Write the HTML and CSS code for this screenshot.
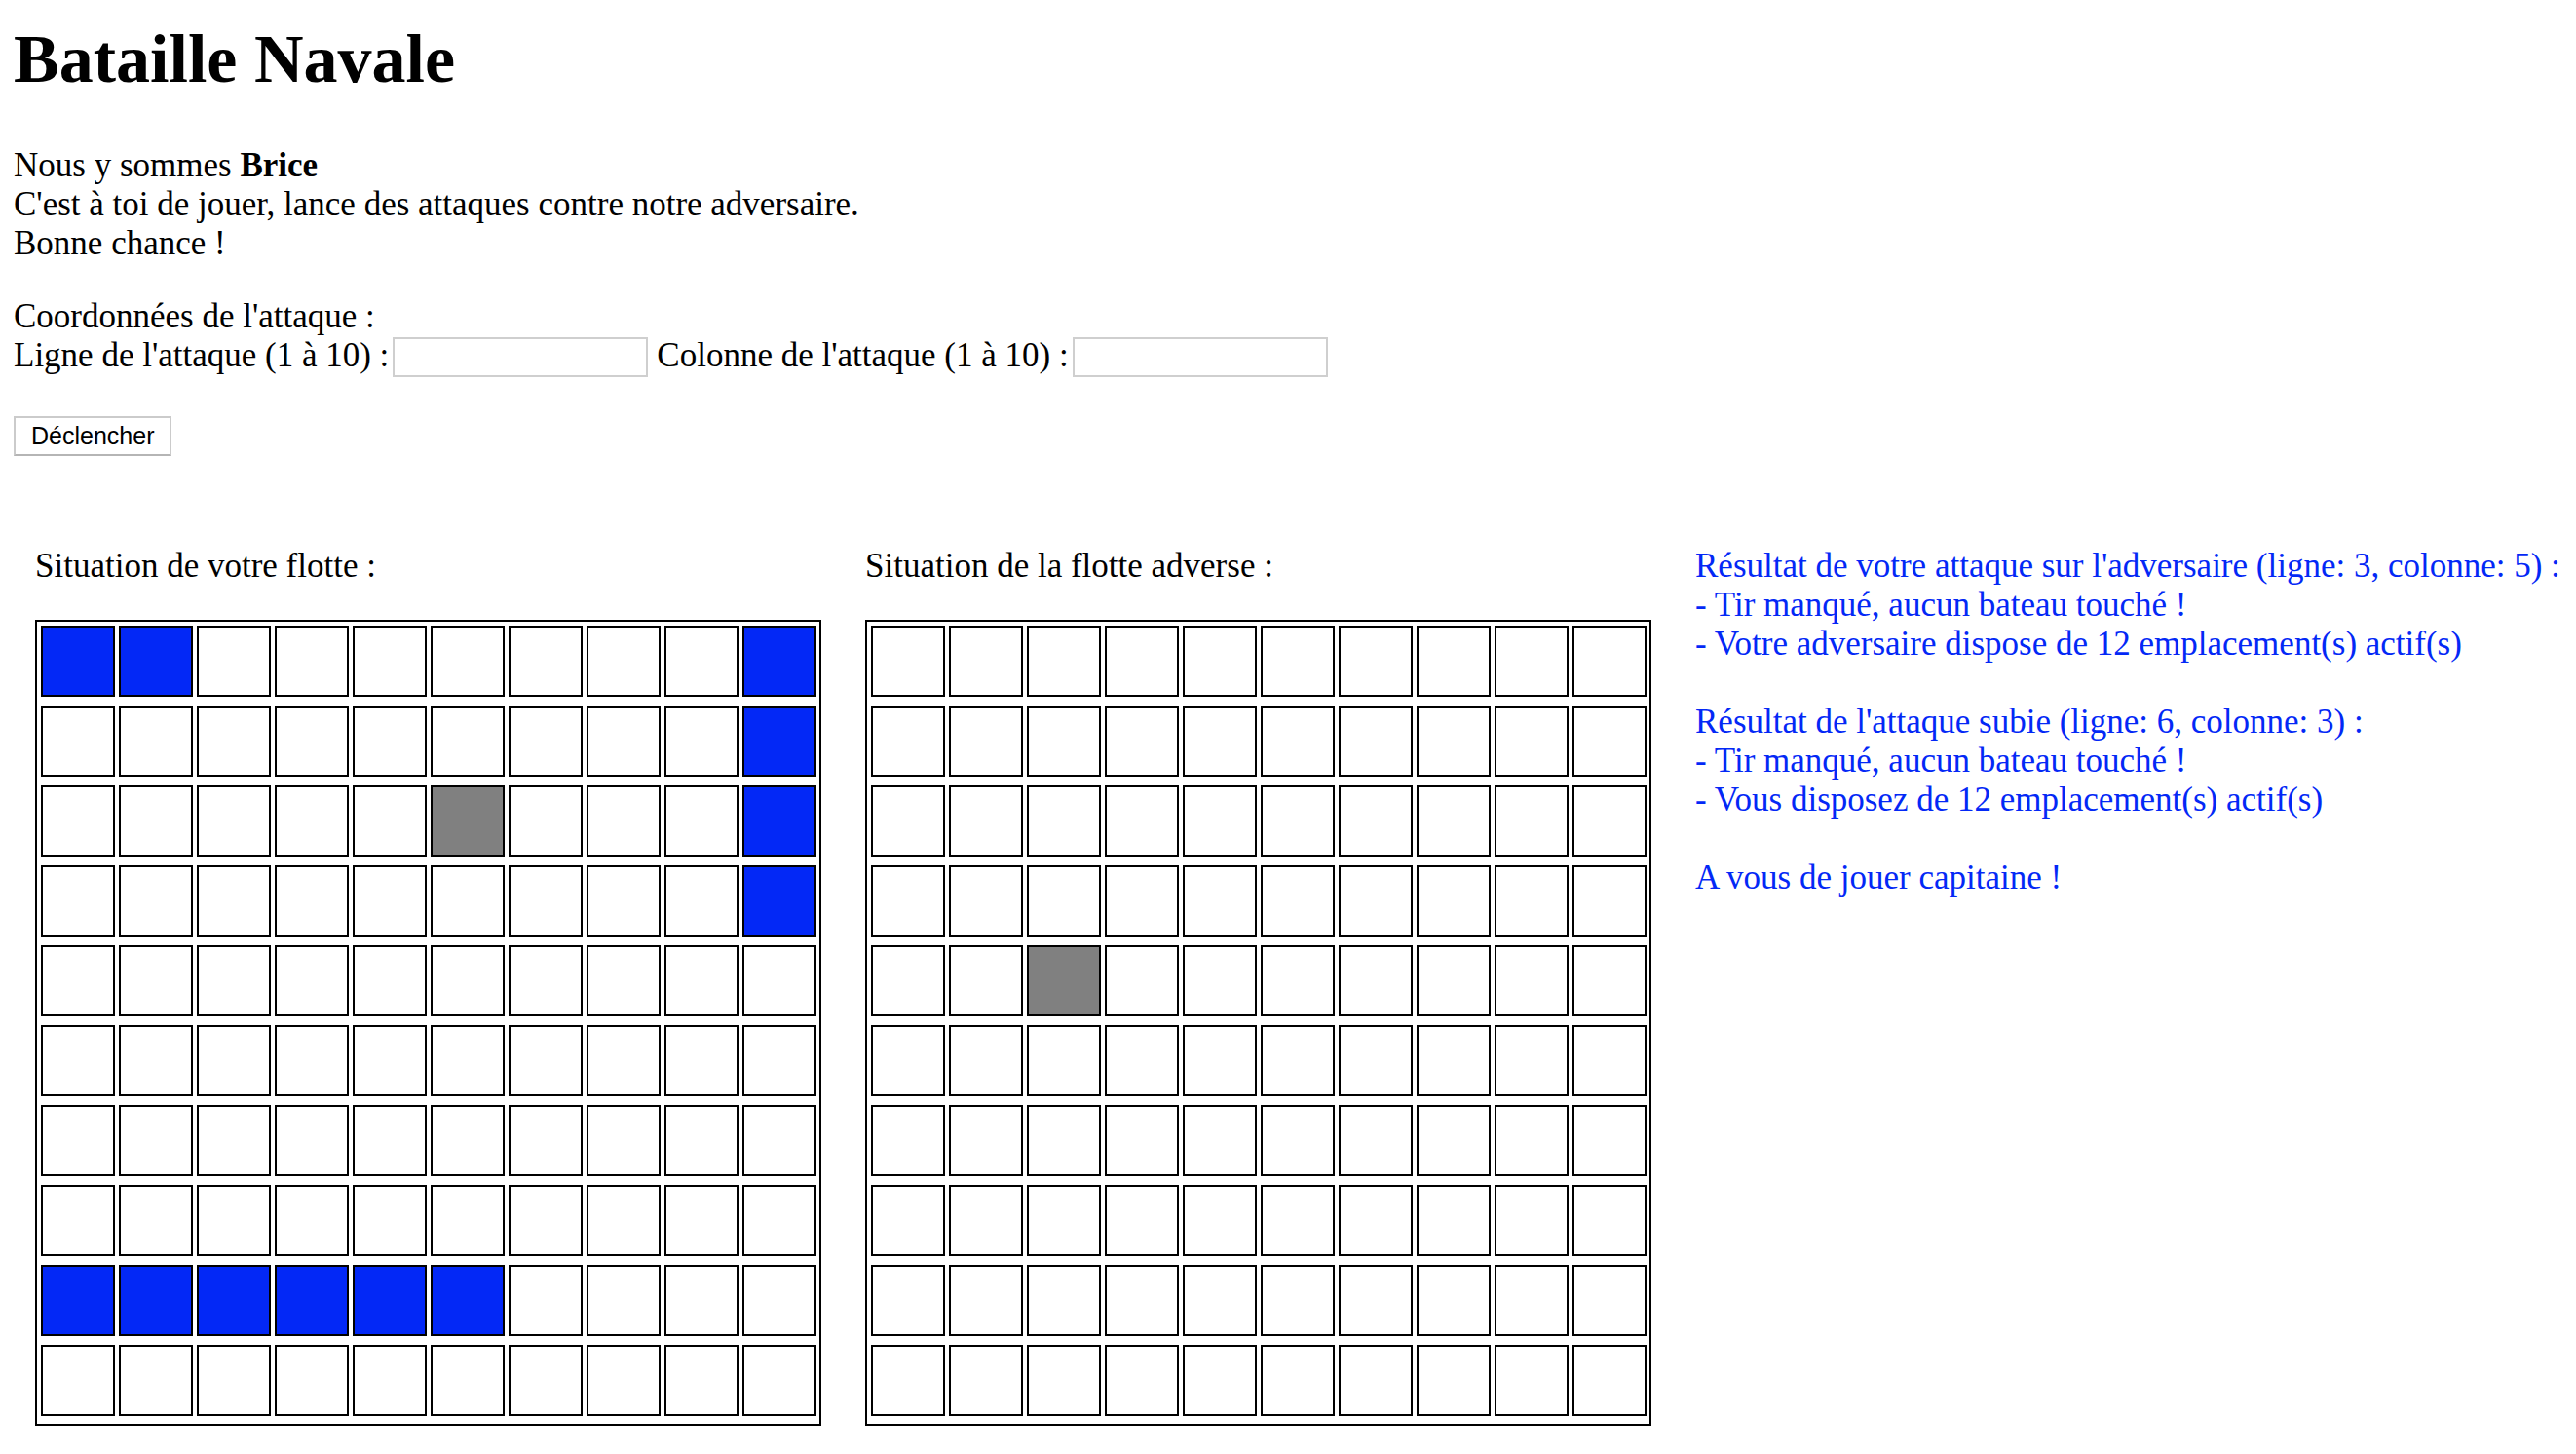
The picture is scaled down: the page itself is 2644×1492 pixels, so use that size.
FILE: index.html
```html
<!DOCTYPE html>
<html lang="fr">
<head>
<meta charset="utf-8">
<title>Bataille Navale</title>
<link rel="stylesheet" href="styles.css">
</head>
<body>
<h1 class="title">Bataille Navale</h1>
<p class="intro">Nous y sommes <b>Brice</b><br>C'est à toi de jouer, lance des attaques contre notre adversaire.<br>Bonne chance !</p>
<form class="attack">
  <div class="coord-title">Coordonnées de l'attaque :</div>
  <div class="coord-row"><label>Ligne de l'attaque (1 à 10) :</label><input class="field" type="text"><label class="label-col">Colonne de l'attaque (1 à 10) :</label><input class="field" type="text"></div>
  <button class="fire" type="button">Déclencher</button>
</form>
<div class="boards">
  <section class="board">
    <p class="board-title">Situation de votre flotte :</p>
    <div class="grid">
      <div class="c ship"></div><div class="c ship"></div><div class="c"></div><div class="c"></div><div class="c"></div><div class="c"></div><div class="c"></div><div class="c"></div><div class="c"></div><div class="c ship"></div>
      <div class="c"></div><div class="c"></div><div class="c"></div><div class="c"></div><div class="c"></div><div class="c"></div><div class="c"></div><div class="c"></div><div class="c"></div><div class="c ship"></div>
      <div class="c"></div><div class="c"></div><div class="c"></div><div class="c"></div><div class="c"></div><div class="c miss"></div><div class="c"></div><div class="c"></div><div class="c"></div><div class="c ship"></div>
      <div class="c"></div><div class="c"></div><div class="c"></div><div class="c"></div><div class="c"></div><div class="c"></div><div class="c"></div><div class="c"></div><div class="c"></div><div class="c ship"></div>
      <div class="c"></div><div class="c"></div><div class="c"></div><div class="c"></div><div class="c"></div><div class="c"></div><div class="c"></div><div class="c"></div><div class="c"></div><div class="c"></div>
      <div class="c"></div><div class="c"></div><div class="c"></div><div class="c"></div><div class="c"></div><div class="c"></div><div class="c"></div><div class="c"></div><div class="c"></div><div class="c"></div>
      <div class="c"></div><div class="c"></div><div class="c"></div><div class="c"></div><div class="c"></div><div class="c"></div><div class="c"></div><div class="c"></div><div class="c"></div><div class="c"></div>
      <div class="c"></div><div class="c"></div><div class="c"></div><div class="c"></div><div class="c"></div><div class="c"></div><div class="c"></div><div class="c"></div><div class="c"></div><div class="c"></div>
      <div class="c ship"></div><div class="c ship"></div><div class="c ship"></div><div class="c ship"></div><div class="c ship"></div><div class="c ship"></div><div class="c"></div><div class="c"></div><div class="c"></div><div class="c"></div>
      <div class="c"></div><div class="c"></div><div class="c"></div><div class="c"></div><div class="c"></div><div class="c"></div><div class="c"></div><div class="c"></div><div class="c"></div><div class="c"></div>
    </div>
  </section>
  <section class="board">
    <p class="board-title">Situation de la flotte adverse :</p>
    <div class="grid">
      <div class="c"></div><div class="c"></div><div class="c"></div><div class="c"></div><div class="c"></div><div class="c"></div><div class="c"></div><div class="c"></div><div class="c"></div><div class="c"></div>
      <div class="c"></div><div class="c"></div><div class="c"></div><div class="c"></div><div class="c"></div><div class="c"></div><div class="c"></div><div class="c"></div><div class="c"></div><div class="c"></div>
      <div class="c"></div><div class="c"></div><div class="c"></div><div class="c"></div><div class="c"></div><div class="c"></div><div class="c"></div><div class="c"></div><div class="c"></div><div class="c"></div>
      <div class="c"></div><div class="c"></div><div class="c"></div><div class="c"></div><div class="c"></div><div class="c"></div><div class="c"></div><div class="c"></div><div class="c"></div><div class="c"></div>
      <div class="c"></div><div class="c"></div><div class="c miss"></div><div class="c"></div><div class="c"></div><div class="c"></div><div class="c"></div><div class="c"></div><div class="c"></div><div class="c"></div>
      <div class="c"></div><div class="c"></div><div class="c"></div><div class="c"></div><div class="c"></div><div class="c"></div><div class="c"></div><div class="c"></div><div class="c"></div><div class="c"></div>
      <div class="c"></div><div class="c"></div><div class="c"></div><div class="c"></div><div class="c"></div><div class="c"></div><div class="c"></div><div class="c"></div><div class="c"></div><div class="c"></div>
      <div class="c"></div><div class="c"></div><div class="c"></div><div class="c"></div><div class="c"></div><div class="c"></div><div class="c"></div><div class="c"></div><div class="c"></div><div class="c"></div>
      <div class="c"></div><div class="c"></div><div class="c"></div><div class="c"></div><div class="c"></div><div class="c"></div><div class="c"></div><div class="c"></div><div class="c"></div><div class="c"></div>
      <div class="c"></div><div class="c"></div><div class="c"></div><div class="c"></div><div class="c"></div><div class="c"></div><div class="c"></div><div class="c"></div><div class="c"></div><div class="c"></div>
    </div>
  </section>
  <section class="report">
    <p class="report-block">Résultat de votre attaque sur l'adversaire (ligne: 3, colonne: 5) :<br>- Tir manqué, aucun bateau touché !<br>- Votre adversaire dispose de 12 emplacement(s) actif(s)</p>
    <p class="report-block">Résultat de l'attaque subie (ligne: 6, colonne: 3) :<br>- Tir manqué, aucun bateau touché !<br>- Vous disposez de 12 emplacement(s) actif(s)</p>
    <p class="report-block">A vous de jouer capitaine !</p>
  </section>
</div>
</body>
</html>
```
FILE: styles.css
```css
html, body {
  margin: 0;
}

body {
  padding: 0 14px;
  font-family: "Liberation Serif", "Times New Roman", serif;
  font-size: 35px;
  line-height: 40px;
  color: #000;
  background: #fff;
}

.title {
  font-size: 70px;
  line-height: 80px;
  font-weight: bold;
  margin: 21px 0 0;
}

.intro {
  margin: 48.5px 0 0;
}

.attack {
  margin: 35px 0 0;
}

.coord-row {
  display: flex;
  align-items: flex-start;
  white-space: nowrap;
}

.field {
  box-sizing: border-box;
  width: 262px;
  height: 41px;
  margin: 1.5px 0 0 4px;
  padding: 0;
  border: 2px solid #cfcfcf;
  background: #fff;
  font: 22px "Liberation Sans", Arial, sans-serif;
}

.label-col {
  margin-left: 9px;
}

.fire {
  display: block;
  box-sizing: border-box;
  margin-top: 40px;
  height: 41px;
  padding: 0 16px;
  border: 2px solid #cbcbcb;
  border-bottom-color: #b5b5b5;
  border-radius: 0;
  background: #fff;
  color: #000;
  font-family: "Liberation Sans", Arial, sans-serif;
  font-size: 25px;
}

.boards {
  display: flex;
  align-items: flex-start;
  gap: 45px;
  margin: 93px 0 0 22px;
}

.board-title {
  margin: 0 0 34.5px;
  white-space: nowrap;
}

.grid {
  display: grid;
  grid-template-columns: repeat(10, 76px);
  grid-auto-rows: 73px;
  column-gap: 4px;
  row-gap: 9px;
  padding: 4px 3px 8px 4px;
  border: 2px solid #000;
  width: max-content;
}

.c {
  box-sizing: border-box;
  border: 2px solid #000;
  background: #fff;
}

.ship {
  background: #0328f6;
}

.miss {
  background: #808080;
}

.report {
  color: #0328f6;
  white-space: nowrap;
}

.report-block {
  margin: 0 0 40px;
}
```
